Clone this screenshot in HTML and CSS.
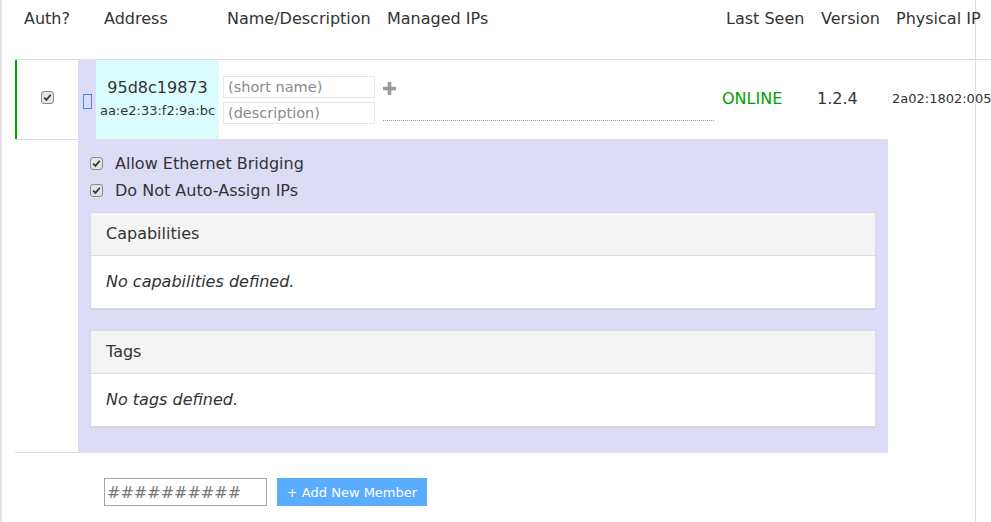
FILE: index.html
```html
<!DOCTYPE html>
<html>
<head>
<meta charset="utf-8">
<link rel="stylesheet" href="styles.css">
</head>
<body>
<div class="page">
  <div class="members">
    <div class="th th-auth">Auth?</div>
    <div class="th">Address</div>
    <div class="th">Name/Description</div>
    <div class="th">Managed IPs</div>
    <div class="th">Last Seen</div>
    <div class="th">Version</div>
    <div class="th">Physical IP</div>

    <div class="td auth">
      <svg class="cb" width="13" height="13" viewBox="0 0 13 13"><rect x="0.5" y="0.5" width="12" height="12" rx="2.5" fill="#e4e4e4" stroke="#8c8c8c"/><path d="M3.2 6.6 L5.4 8.9 L9.8 3.8" fill="none" stroke="#333" stroke-width="1.7"/></svg>
    </div>
    <div class="td strip">
      <svg width="9" height="15" viewBox="0 0 9 15"><rect x="0.5" y="0.5" width="8" height="14" fill="none" stroke="#3b8ff0"/></svg>
    </div>
    <div class="td addr">
      <div class="node-id">95d8c19873</div>
      <div class="mac">aa:e2:33:f2:9a:bc</div>
    </div>
    <div class="td name">
      <input class="fld" type="text" placeholder="(short name)">
      <input class="fld" type="text" placeholder="(description)">
    </div>
    <div class="td ips">
      <svg class="plus" width="13" height="13" viewBox="0 0 13 13"><path d="M6.5 0 V13 M0 6.5 H13" stroke="#9a9a9a" stroke-width="3.6"/></svg>
      <div class="ip-line"></div>
    </div>
    <div class="td seen">ONLINE</div>
    <div class="td ver">1.2.4</div>
    <div class="td phys">2a02:1802:005</div>

    <div class="x-auth"></div>
    <div class="detail">
      <div class="opt">
        <svg class="cb" width="13" height="13" viewBox="0 0 13 13"><rect x="0.5" y="0.5" width="12" height="12" rx="2.5" fill="#e4e4e4" stroke="#8c8c8c"/><path d="M3.2 6.6 L5.4 8.9 L9.8 3.8" fill="none" stroke="#333" stroke-width="1.7"/></svg>
        <span>Allow Ethernet Bridging</span>
      </div>
      <div class="opt">
        <svg class="cb" width="13" height="13" viewBox="0 0 13 13"><rect x="0.5" y="0.5" width="12" height="12" rx="2.5" fill="#e4e4e4" stroke="#8c8c8c"/><path d="M3.2 6.6 L5.4 8.9 L9.8 3.8" fill="none" stroke="#333" stroke-width="1.7"/></svg>
        <span>Do Not Auto-Assign IPs</span>
      </div>
      <div class="panel">
        <div class="panel-h">Capabilities</div>
        <div class="panel-b"><em>No capabilities defined.</em></div>
      </div>
      <div class="panel panel-tags">
        <div class="panel-h">Tags</div>
        <div class="panel-b"><em>No tags defined.</em></div>
      </div>
    </div>

    <div class="add">
      <input class="new-id" type="text" placeholder="##########">
      <button class="add-btn" type="button">+ Add New Member</button>
    </div>
  </div>
</div>
</body>
</html>
```

FILE: styles.css
```css
html, body {
  margin: 0;
  padding: 0;
  overflow: hidden;
  background: #fff;
}
body {
  font-family: "DejaVu Sans", sans-serif;
  font-size: 16px;
  color: #333;
}
.page {
  box-sizing: border-box;
  width: 976px;
  height: 522px;
  border-left: 2px solid #e2e2e2;
  border-right: 1px solid #dcdcdc;
  padding-left: 13px;
}
.members {
  width: 1100px;
  display: grid;
  grid-template-columns: 63px 18px 123px 160px 339px 95px 75px 1fr;
  align-items: stretch;
}
.th {
  box-sizing: border-box;
  height: 60px;
  padding: 9px 8px 0;
  line-height: 19px;
  border-bottom: 1px solid #ddd;
  white-space: nowrap;
}
.th-auth {
  grid-column: 1 / 3;
  padding-left: 9px;
}
.td {
  box-sizing: border-box;
  height: 79px;
  white-space: nowrap;
}
.auth {
  border-left: 2px solid #00a800;
  display: flex;
  align-items: center;
  justify-content: center;
  padding-bottom: 4px;
}
.cb { display: block; }
.strip {
  background: #dddcf7;
  display: flex;
  align-items: center;
  justify-content: center;
  padding-top: 3px;
}
.addr {
  background: #dcfdfe;
  text-align: center;
  padding-top: 18px;
}
.node-id { line-height: 19px; }
.mac {
  font-size: 13px;
  line-height: 16px;
  margin-top: 6px;
}
.name {
  padding: 0 4px;
  display: flex;
  flex-direction: column;
  justify-content: center;
  gap: 4px;
}
.fld {
  box-sizing: border-box;
  width: 152px;
  height: 22px;
  margin: 0;
  border: 1px solid #e6e6e6;
  padding: 0 4px;
  font-family: "DejaVu Sans", sans-serif;
  font-size: 14.5px;
  color: #333;
  background: #fff;
  outline: none;
}
.fld::placeholder { color: #8a8a8a; }
.ips {
  padding: 22px 4px 0;
}
.plus { display: block; }
.ip-line {
  height: 25px;
  border-bottom: 1px dotted #9a9a9a;
}
.seen, .ver, .phys {
  display: flex;
  align-items: center;
  padding: 0 4px 2px;
}
.seen { color: #00a000; }
.phys { font-size: 13px; }
.x-auth {
  box-sizing: border-box;
  border-top: 1px solid #ddd;
  border-bottom: 1px solid #ddd;
}
.detail {
  grid-column: 2 / 8;
  background: #dddcf7;
  border-bottom: 1px solid #ddd;
  padding: 11px 12px 25px;
}
.opt {
  height: 27px;
  display: flex;
  align-items: center;
  gap: 12px;
}
.panel {
  background: #fff;
  border: 1px solid #dadada;
  box-shadow: 0 1px 1px rgba(0, 0, 0, 0.06);
  margin-top: 8px;
}
.panel-tags { margin-top: 21px; }
.panel-h {
  background: #f4f4f4;
  border-bottom: 1px solid #ddd;
  padding: 10px 15px;
  line-height: 22px;
}
.panel-b {
  padding: 15px;
  line-height: 22px;
}
.add {
  grid-column: 3 / 9;
  padding: 25px 0 0 8px;
  display: flex;
  gap: 10px;
}
.new-id {
  box-sizing: border-box;
  width: 163px;
  height: 28px;
  margin: 0;
  border: 1px solid #a6a6a6;
  padding: 0 2px;
  font-family: "DejaVu Sans", sans-serif;
  font-size: 16px;
  outline: none;
}
.new-id::placeholder { color: #777; }
.add-btn {
  box-sizing: border-box;
  width: 150px;
  height: 28px;
  margin: 0;
  border: none;
  background: #5aacfe;
  color: #fff;
  font-family: "DejaVu Sans", sans-serif;
  font-size: 13px;
  padding: 0;
  white-space: nowrap;
}
```
